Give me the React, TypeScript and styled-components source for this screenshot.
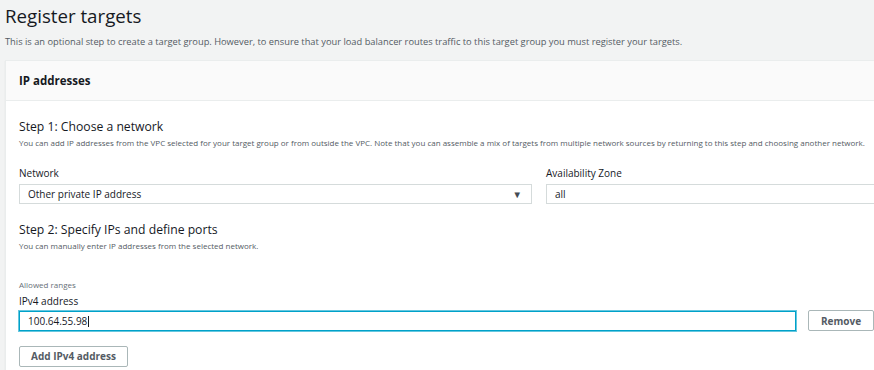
import React from 'react'
import styled, { createGlobalStyle } from 'styled-components'

const GlobalStyle = createGlobalStyle`
  html, body {
    margin: 0;
    padding: 0;
    background: #f2f3f3;
    font-family: "Open Sans", "Noto Sans", Arial, sans-serif;
    color: #16191f;
  }
`

const Page = styled.div`
  width: 874px;
  height: 370px;
  overflow: hidden;
  padding: 0 0 0 5px;
  box-sizing: border-box;
`

const Title = styled.h1`
  font-size: 18.7px;
  font-weight: 400;
  margin: 0;
  padding-top: 3px;
  line-height: 26px;
`

const Subtitle = styled.p`
  font-size: 9.3px;
  color: #545b64;
  margin: 6px 0 0;
  line-height: 14px;
`

const Panel = styled.section`
  margin-top: 11px;
  background: #ffffff;
  border-left: 1px solid #eaeded;
  border-top: 1px solid #eaeded;
  box-shadow: 0 1px 1px rgba(0, 28, 36, 0.1);
  min-height: 320px;
`

const PanelHeader = styled.header`
  background: #fafafa;
  border-bottom: 1px solid #eaeded;
  height: 39px;
  display: flex;
  align-items: center;
  padding: 0 13px;
`

const PanelTitle = styled.h2`
  font-size: 11.5px;
  font-weight: 700;
  margin: 0;
`

const PanelBody = styled.div`
  padding: 17px 0 0 13px;
`

const StepTitle = styled.h3`
  font-size: 12.2px;
  font-weight: 400;
  margin: 0;
  line-height: 18px;
`

const StepDesc = styled.p`
  font-size: 8px;
  color: #545b64;
  margin: 1px 0 0;
  line-height: 12px;
  white-space: nowrap;
`

const FieldRow = styled.div`
  display: flex;
  gap: 14px;
  margin-top: 17px;
`

const Field = styled.div<{ $width: number }>`
  width: ${(p) => p.$width}px;
  flex-shrink: 0;
`

const Label = styled.div<{ $muted?: boolean; $gap?: number }>`
  font-size: ${(p) => (p.$muted ? 8 : 10)}px;
  color: ${(p) => (p.$muted ? '#687078' : '#16191f')};
  line-height: 14px;
  margin-bottom: ${(p) => p.$gap ?? 2}px;
`

const Box = styled.div<{ $focus?: boolean }>`
  height: 20px;
  box-sizing: border-box;
  border: 1px solid ${(p) => (p.$focus ? '#00a1c9' : '#d5dbdb')};
  box-shadow: ${(p) => (p.$focus ? '0 0 0 1px rgba(0, 161, 201, 0.6)' : 'none')};
  background: #fff;
  display: flex;
  align-items: center;
  justify-content: space-between;
  padding: 0 8px;
  font-size: 10px;
  color: #16191f;
`

const Caret = styled.span`
  font-size: 9.5px;
  color: #444b53;
  margin-right: 1px;
`

const Cursor = styled.span`
  display: inline-block;
  width: 1px;
  height: 11px;
  background: #16191f;
  margin-left: 1px;
  vertical-align: middle;
`

const Section2 = styled.div`
  margin-top: 17px;
`

const RangeBlock = styled.div`
  margin-top: 26px;
`

const InputRow = styled.div`
  display: flex;
  align-items: center;
  gap: 12px;
`

const Button = styled.button<{ $width: number }>`
  width: ${(p) => p.$width}px;
  height: 21px;
  box-sizing: border-box;
  background: #fff;
  border: 1px solid #aab7b8;
  border-radius: 2px;
  font-family: inherit;
  font-size: 10px;
  font-weight: 700;
  color: #545b64;
  padding: 0;
  flex-shrink: 0;
`

const AddRow = styled.div`
  margin-top: 12px;
`

export default function App() {
  return (
    <>
      <GlobalStyle />
      <Page>
        <Title>Register targets</Title>
        <Subtitle>
          This is an optional step to create a target group. However, to ensure that your load
          balancer routes traffic to this target group you must register your targets.
        </Subtitle>
        <Panel>
          <PanelHeader>
            <PanelTitle>IP addresses</PanelTitle>
          </PanelHeader>
          <PanelBody>
            <StepTitle>Step 1: Choose a network</StepTitle>
            <StepDesc>
              You can add IP addresses from the VPC selected for your target group or from outside
              the VPC. Note that you can assemble a mix of targets from multiple network sources by
              returning to this step and choosing another network.
            </StepDesc>
            <FieldRow>
              <Field $width={513}>
                <Label $gap={4}>Network</Label>
                <Box>
                  Other private IP address
                  <Caret>▼</Caret>
                </Box>
              </Field>
              <Field $width={340}>
                <Label $gap={4}>Availability Zone</Label>
                <Box>all</Box>
              </Field>
            </FieldRow>
            <Section2>
              <StepTitle>Step 2: Specify IPs and define ports</StepTitle>
              <StepDesc>You can manually enter IP addresses from the selected network.</StepDesc>
            </Section2>
            <RangeBlock>
              <Label $muted>Allowed ranges</Label>
              <Label>IPv4 address</Label>
              <InputRow>
                <Field $width={777}>
                  <Box $focus>
                    <span>
                      100.64.55.98
                      <Cursor />
                    </span>
                  </Box>
                </Field>
                <Button $width={66}>Remove</Button>
              </InputRow>
            </RangeBlock>
            <AddRow>
              <Button $width={109}>Add IPv4 address</Button>
            </AddRow>
          </PanelBody>
        </Panel>
      </Page>
    </>
  )
}
